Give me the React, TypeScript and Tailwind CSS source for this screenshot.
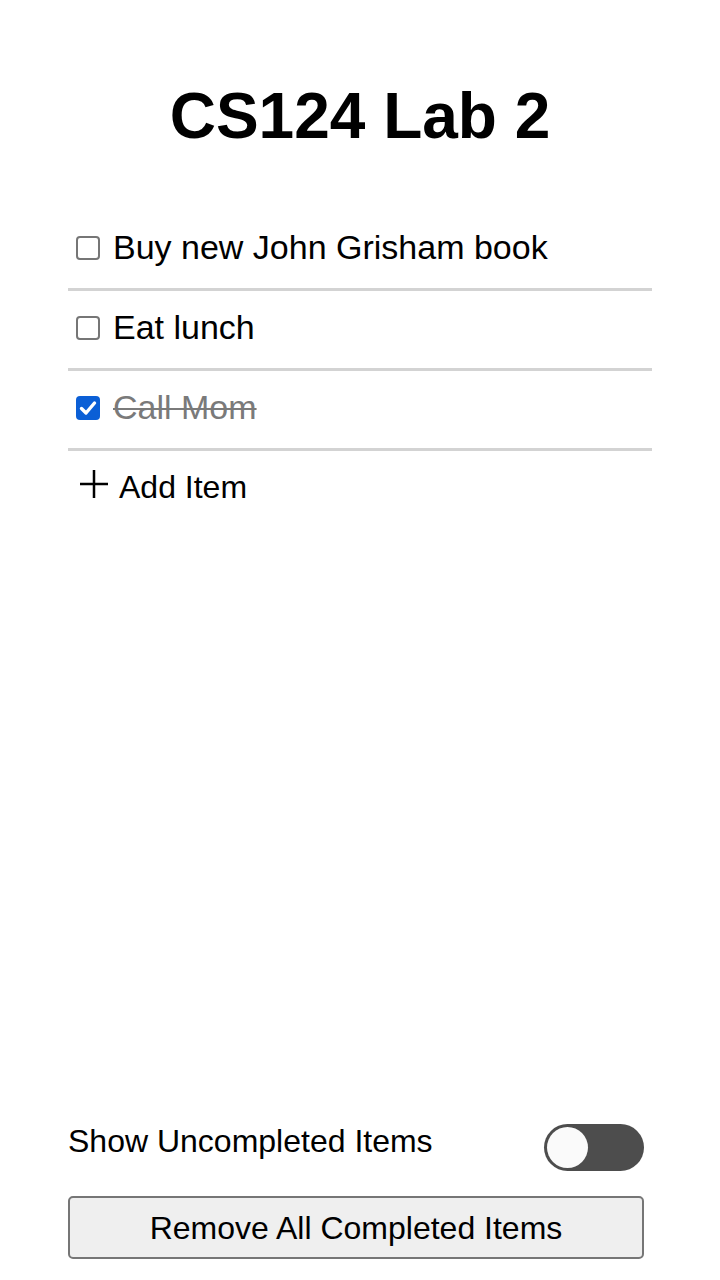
import { useState } from "react";

interface Item {
    id: number,
    text: string,
    done: boolean
}

const initialItems: Item[] = [
    { id: 1, text: "Buy new John Grisham book", done: false },
    { id: 2, text: "Eat lunch", done: false },
    { id: 3, text: "Call Mom", done: true },
];

function Checkbox({ checked, onClick }: { checked: boolean, onClick: () => void }) {
    if (checked) {
        return (
            <button onClick={onClick} className="mt-[8px] ml-[8px] flex h-[24px] w-[24px] shrink-0 items-center justify-center rounded-[4px] bg-[#0b5fd6]">
                <svg width="20" height="20" viewBox="0 0 20 20" fill="none">
                    <path d="M3.5 10.5 L8 15 L16.5 5" stroke="white" strokeWidth="3.4" strokeLinecap="round" strokeLinejoin="round" />
                </svg>
            </button>
        )
    }
    return (
        <button onClick={onClick} className="mt-[8px] ml-[8px] h-[24px] w-[24px] shrink-0 rounded-[4px] border-2 border-[#767676] bg-white" />
    )
}

export default function App() {
    const [items, setItems] = useState<Item[]>(initialItems);
    const [showUncompleted, setShowUncompleted] = useState(false);

    const toggle = (id: number) =>
        setItems(items.map(i => i.id === id ? { ...i, done: !i.done } : i));

    return (
        <div className="flex h-[1280px] w-[720px] flex-col bg-white text-black font-['Liberation_Sans',Arial,sans-serif]">

            {/* Title */}
            <h1 className="mt-[84px] text-center text-[64px] font-bold leading-[64px]">
                CS124 Lab 2
            </h1>

            {/* List */}
            <div className="mx-[68px] mt-[63px] flex flex-col">
                {items.map(item => (
                    <div key={item.id} className="flex h-[80px] items-start gap-[13px] border-b-[3px] border-[#d3d3d3] pt-[17px]">
                        <Checkbox checked={item.done} onClick={() => toggle(item.id)} />
                        <span className={item.done
                            ? "mt-[2px] text-[34px] leading-[34px] text-[#7a7a7a] line-through decoration-[2px]"
                            : "mt-[2px] text-[34px] leading-[34px]"}>
                            {item.text}
                        </span>
                    </div>
                ))}

                <div className="flex items-start pt-[19px]">
                    <svg className="ml-[12px] shrink-0" width="28" height="28" viewBox="0 0 28 28">
                        <path d="M14 0 V28 M0 14 H28" stroke="black" strokeWidth="2.5" />
                    </svg>
                    <span className="ml-[11px] mt-[1px] text-[32px] leading-[32px]">Add Item</span>
                </div>
            </div>

            <div className="flex-1" />

            {/* Bottom controls */}
            <div className="ml-[68px] mr-[76px] mb-[21px] flex flex-col gap-[25px]">
                <div className="flex items-start justify-between">
                    <span className="mt-[1px] text-[32px] leading-[32px]">Show Uncompleted Items</span>
                    <button
                        onClick={() => setShowUncompleted(!showUncompleted)}
                        className={"flex h-[47px] w-[100px] items-center rounded-full bg-[#4d4d4d] px-[3px] " + (showUncompleted ? "justify-end" : "justify-start")}>
                        <span className="h-[41px] w-[41px] rounded-full bg-[#fafafa]" />
                    </button>
                </div>

                <button className="h-[63px] w-full rounded-[5px] border-2 border-[#767676] bg-[#efefef] text-[32px] leading-[32px]">
                    Remove All Completed Items
                </button>
            </div>
        </div>
    )
}
